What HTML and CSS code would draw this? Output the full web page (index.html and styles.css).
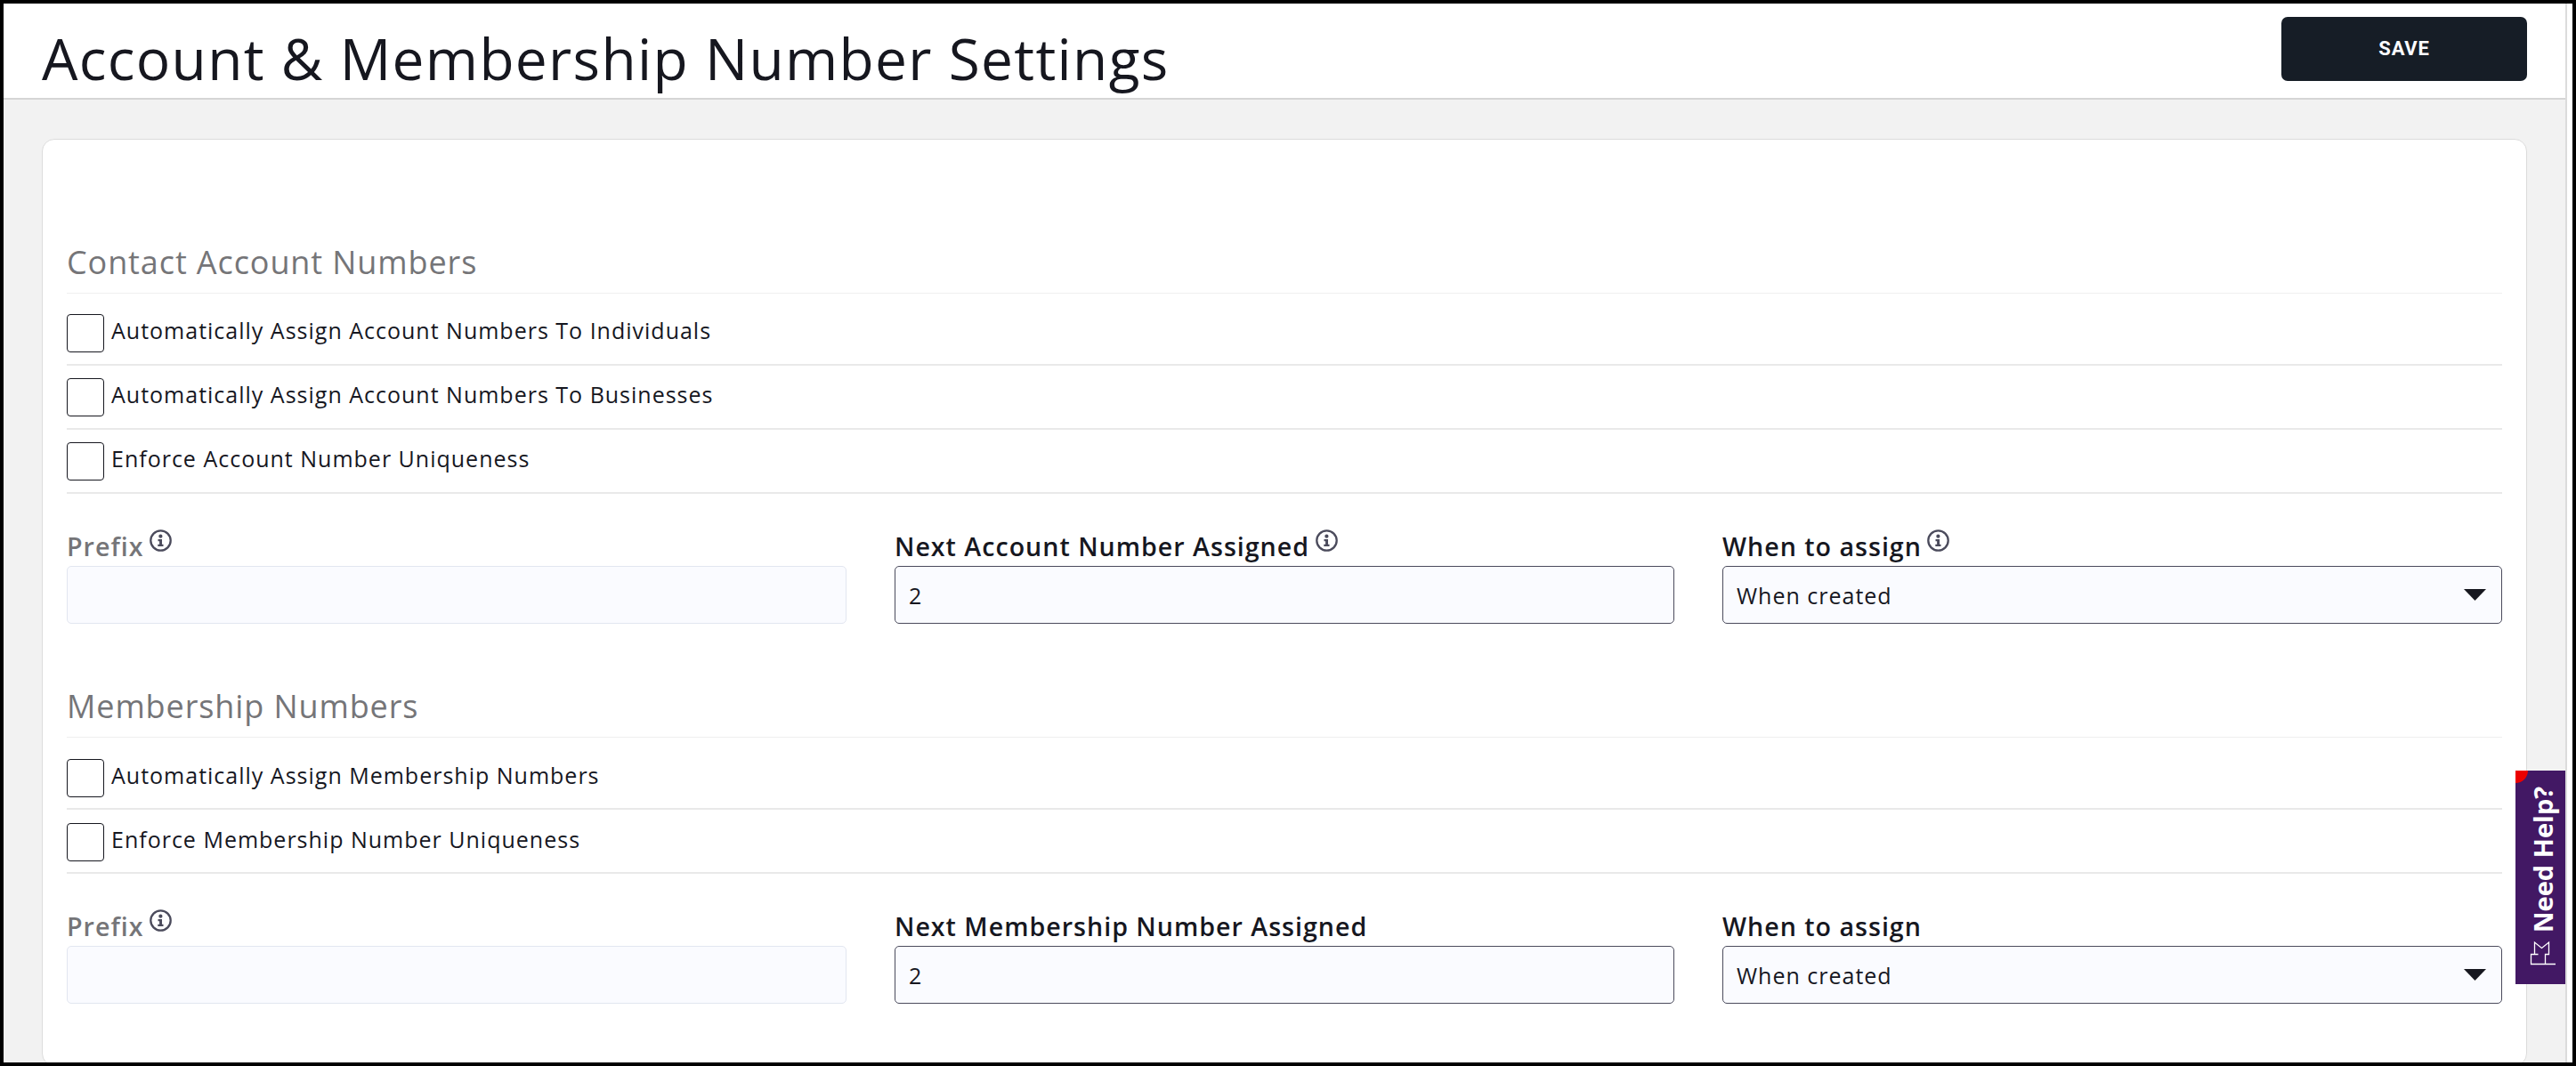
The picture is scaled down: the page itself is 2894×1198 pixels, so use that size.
FILE: index.html
```html
<!DOCTYPE html>
<html lang="en">
<head>
<meta charset="utf-8">
<title>Account &amp; Membership Number Settings</title>
<link rel="stylesheet" href="styles.css">
</head>
<body>
<svg class="defs" aria-hidden="true">
  <symbol id="info" viewBox="0 0 25 25">
    <circle cx="12.5" cy="12.5" r="11.2" fill="none" stroke="currentColor" stroke-width="2.300"/>
    <circle cx="12.4" cy="7.700" r="2.100" fill="currentColor"/>
    <path d="M9.500 11h4.500v5.800h1.500v2.200H9.300v-2.200h1.800v-3.600H9.500z" fill="currentColor"/>
  </symbol>
</svg>
<div class="window">
  <div class="app">
    <header class="header">
      <h1 class="title">Account &amp; Membership Number Settings</h1>
      <button class="save">SAVE</button>
    </header>
    <main class="content">
      <div class="card">
        <section class="section">
          <h2 class="heading">Contact Account Numbers</h2>
          <label class="check"><span class="box"></span><span class="check-text">Automatically Assign Account Numbers To Individuals</span></label>
          <label class="check"><span class="box"></span><span class="check-text">Automatically Assign Account Numbers To Businesses</span></label>
          <label class="check"><span class="box"></span><span class="check-text">Enforce Account Number Uniqueness</span></label>
          <div class="fields">
            <div class="field disabled">
              <div class="label"><span>Prefix</span><svg class="info"><use href="#info"/></svg></div>
              <div class="control"></div>
            </div>
            <div class="field">
              <div class="label"><span>Next Account Number Assigned</span><svg class="info"><use href="#info"/></svg></div>
              <div class="control">2</div>
            </div>
            <div class="field">
              <div class="label"><span>When to assign</span><svg class="info"><use href="#info"/></svg></div>
              <div class="control">When created<svg class="arrow" viewBox="0 0 25 13"><path d="M0 0h25L12.5 13z"/></svg></div>
            </div>
          </div>
        </section>
        <section class="section membership">
          <h2 class="heading">Membership Numbers</h2>
          <label class="check"><span class="box"></span><span class="check-text">Automatically Assign Membership Numbers</span></label>
          <label class="check"><span class="box"></span><span class="check-text">Enforce Membership Number Uniqueness</span></label>
          <div class="fields">
            <div class="field disabled">
              <div class="label"><span>Prefix</span><svg class="info"><use href="#info"/></svg></div>
              <div class="control"></div>
            </div>
            <div class="field">
              <div class="label"><span>Next Membership Number Assigned</span></div>
              <div class="control">2</div>
            </div>
            <div class="field">
              <div class="label"><span>When to assign</span></div>
              <div class="control">When created<svg class="arrow" viewBox="0 0 25 13"><path d="M0 0h25L12.5 13z"/></svg></div>
            </div>
          </div>
        </section>
      </div>
    </main>
  </div>
  <div class="help">
    <span class="help-dot"></span>
    <span class="help-text">Need Help?</span>
    <svg class="help-icon" viewBox="0 0 30 28"><path d="M29 26.500H1.500V15.500H9.500M5.500 15.500V2L13.500 8.500L21.500 2V15.500H17.500V26.500" fill="none" stroke="#fff" stroke-width="1.300"/></svg>
  </div>
</div>
</body>
</html>
```

FILE: styles.css
```css
* { box-sizing: border-box; }
body {
  margin: 0;
  font-family: "Open Sans", sans-serif;
  color: #16171f;
}
.defs { display: none; }
.window {
  position: relative;
  width: 2894px;
  height: 1198px;
  border: 4px solid #000;
  padding-right: 6px;
  background: #fff;
  overflow: hidden;
}
.app {
  height: 1190px;
  border-right: 2px solid #dcdcdc;
  background: #f2f2f2;
  overflow: hidden;
}
.header {
  display: flex;
  justify-content: space-between;
  align-items: flex-start;
  height: 108px;
  padding: 15px 43px 0;
  border-bottom: 2px solid #d5d5d5;
  background: #fff;
}
.title {
  margin: 2px 0 0;
  font-size: 64px;
  font-weight: 400;
  line-height: 90px;
  letter-spacing: 1.32px;
  white-space: nowrap;
}
.save {
  width: 276px;
  height: 72px;
  padding: 0;
  border: 0;
  border-radius: 7px;
  background: #161d26;
  color: #fafbff;
  font: 700 22px/72px Roboto, sans-serif;
  letter-spacing: 0.8px;
}
.content { padding: 44px 43px 0; }
.card {
  height: 1042px;
  padding: 113px 27px 0;
  border: 1px solid #dcdcdc;
  border-radius: 14px;
  background: #fff;
}
.section { margin-bottom: 68px; }
.heading {
  height: 60px;
  margin: 0 0 7px;
  border-bottom: 1px solid #efefef;
  color: #757578;
  font-size: 36px;
  font-weight: 400;
  line-height: 50px;
  letter-spacing: 0.9px;
}
.check {
  display: flex;
  gap: 8px;
  height: 72px;
  padding-top: 14px;
  border-bottom: 2px solid #e9e9e9;
}
.heading + .check { height: 74px; padding-top: 16px; }
.membership .check { padding-top: 15px; }
.membership .heading + .check { padding-top: 17px; }
.box {
  width: 42px;
  height: 43px;
  border: 1px solid #16171f;
  border-radius: 4px;
}
.check-text {
  font-size: 25px;
  line-height: 36px;
  letter-spacing: 1px;
}
.fields {
  display: grid;
  grid-template-columns: repeat(3, 876px);
  gap: 54px;
  padding-top: 35px;
}
.label {
  display: flex;
  align-items: flex-start;
  gap: 6.5px;
  height: 46px;
  font-size: 28.6px;
  font-weight: 600;
  line-height: 48px;
  letter-spacing: 1px;
  white-space: nowrap;
}
.info {
  width: 25px;
  height: 25px;
  margin-top: 5px;
  color: #4b4b5c;
}
.control {
  display: flex;
  align-items: center;
  justify-content: space-between;
  height: 65px;
  padding: 0 17px 0 15px;
  border: 1px solid #4b4b5c;
  border-radius: 5px;
  background: #fafbff;
  font-size: 25px;
  letter-spacing: 1px;
}
.disabled .label { color: #757578; }
.disabled .control { border-color: #e2e6f0; }
.arrow { width: 25px; height: 13px; fill: #16171f; }
.help {
  position: absolute;
  top: 862px;
  right: 8px;
  display: flex;
  flex-direction: column;
  align-items: center;
  width: 56px;
  height: 240px;
  padding-top: 18px;
  background: #421864;
  overflow: hidden;
}
.help-dot {
  position: absolute;
  top: -14px;
  left: -14px;
  width: 28px;
  height: 28px;
  border-radius: 50%;
  background: #eb0000;
}
.help-text {
  height: 164px;
  margin-left: 6px;
  color: #fff;
  font-size: 29px;
  font-weight: 700;
  line-height: 50px;
  writing-mode: vertical-rl;
  transform: rotate(180deg);
  white-space: nowrap;
}
.help-icon { width: 30px; height: 28px; margin-top: 9px; margin-left: 6px; }
```
